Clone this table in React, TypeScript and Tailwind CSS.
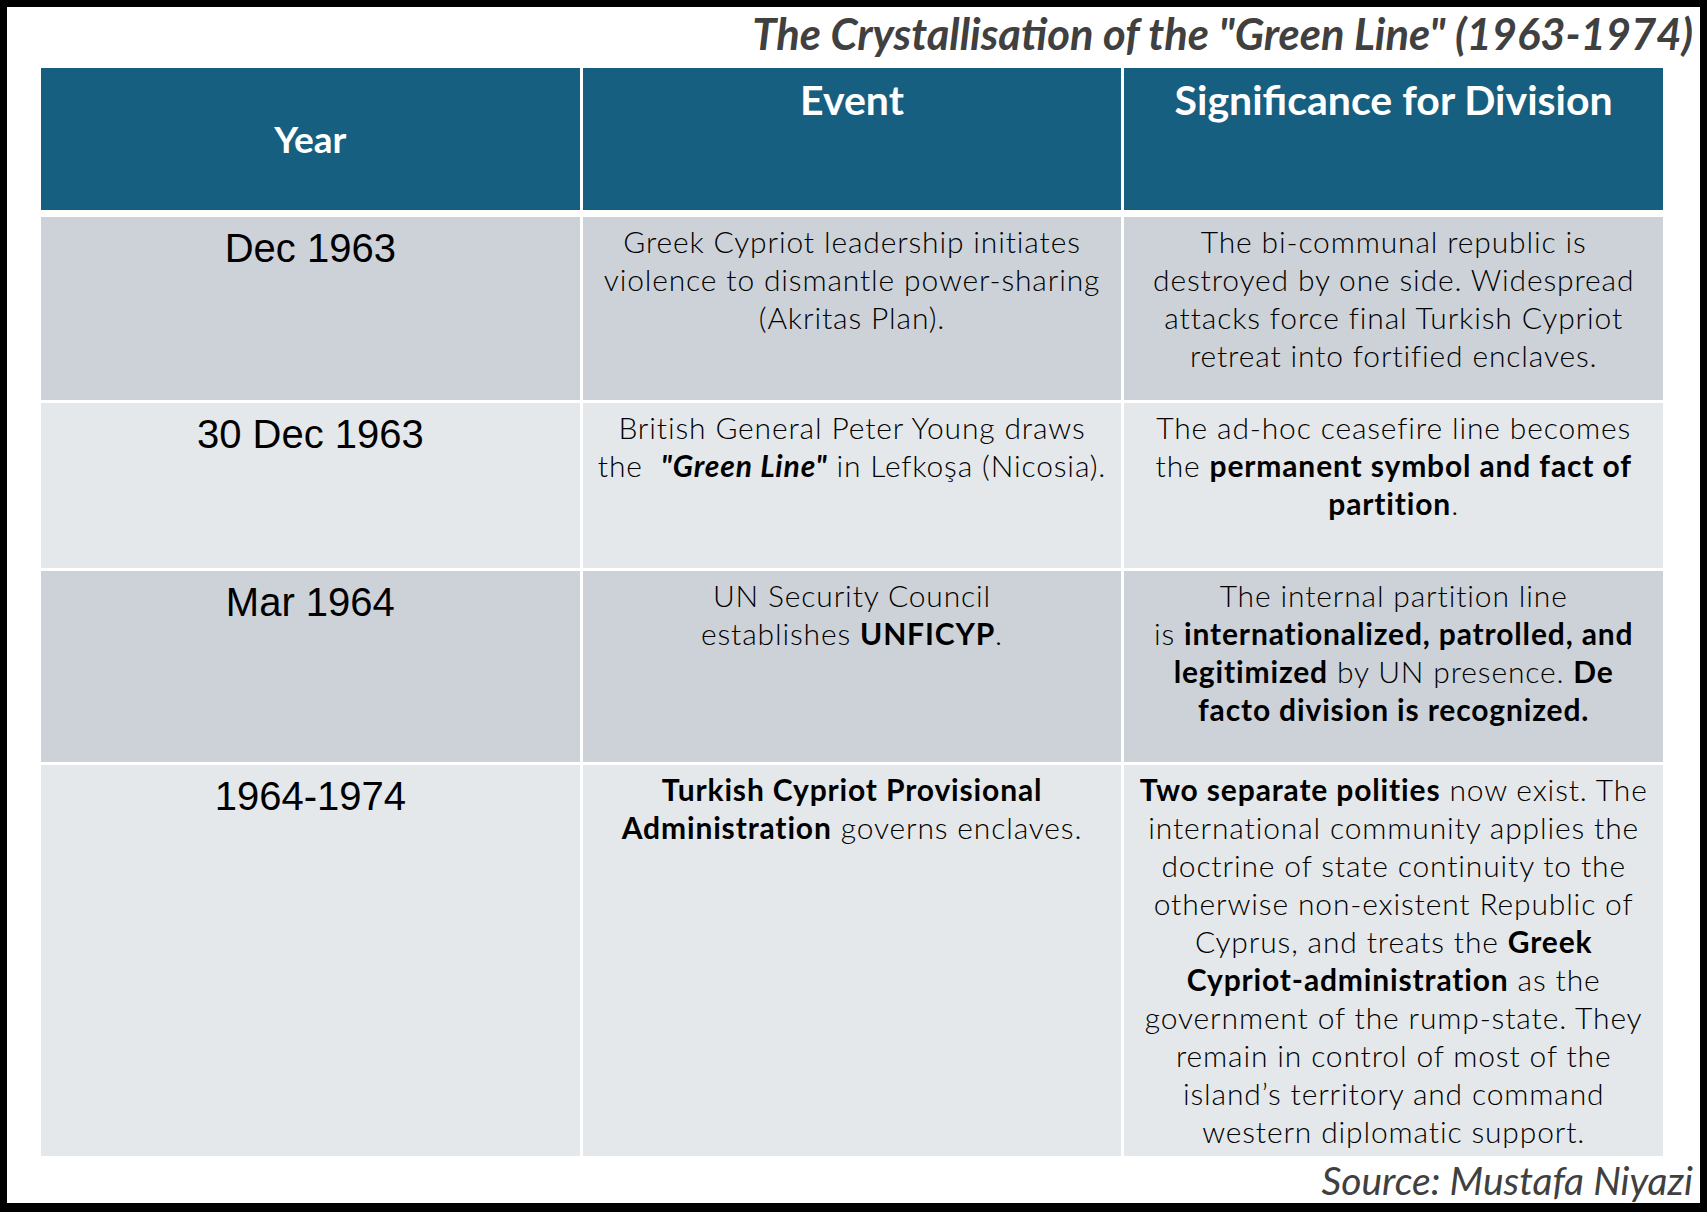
import type { ReactNode } from "react";

const cal = "font-['Lato','Noto_Sans',sans-serif]";
const body = "font-['Lato','Noto_Sans',sans-serif]";
const narrow = "font-['Liberation_Sans_Narrow','Liberation_Sans',sans-serif]";

type Row = {
	year: string;
	event: ReactNode;
	sig: ReactNode;
	h: string;
	bg: string;
};

const B = ({ children }: { children: ReactNode }) => (
	<span className="font-bold">{children}</span>
);

const rows: Row[] = [
	{
		year: "Dec 1963",
		h: "h-[183px]",
		bg: "bg-[#cdd2d9]",
		event: (
			<>
				Greek Cypriot leadership initiates
				<br />
				violence to dismantle power-sharing
				<br />
				(Akritas Plan).
			</>
		),
		sig: (
			<>
				The bi-communal republic is
				<br />
				destroyed by one side. Widespread
				<br />
				attacks force final Turkish Cypriot
				<br />
				retreat into fortified enclaves.
			</>
		),
	},
	{
		year: "30 Dec 1963",
		h: "h-[165px]",
		bg: "bg-[#e5e8eb]",
		event: (
			<>
				British General Peter Young draws
				<br />
				the&nbsp;{" "}
				<span className="font-bold italic">"Green Line"</span> in Lefkoşa
				(Nicosia).
			</>
		),
		sig: (
			<>
				The ad-hoc ceasefire line becomes
				<br />
				the <B>permanent symbol and fact of</B>
				<br />
				<B>partition</B>.
			</>
		),
	},
	{
		year: "Mar 1964",
		h: "h-[191px]",
		bg: "bg-[#cdd2d9]",
		event: (
			<>
				UN Security Council
				<br />
				establishes <B>UNFICYP</B>.
			</>
		),
		sig: (
			<>
				The internal partition line
				<br />
				is <B>internationalized, patrolled, and</B>
				<br />
				<B>legitimized</B> by UN presence. <B>De</B>
				<br />
				<B>facto division is recognized.</B>
			</>
		),
	},
	{
		year: "1964-1974",
		h: "h-[391px]",
		bg: "bg-[#e5e8eb]",
		event: (
			<>
				<B>Turkish Cypriot Provisional</B>
				<br />
				<B>Administration</B> governs enclaves.
			</>
		),
		sig: (
			<>
				<B>Two separate polities</B> now exist. The
				<br />
				international community applies the
				<br />
				doctrine of state continuity to the
				<br />
				otherwise non-existent Republic of
				<br />
				Cyprus, and treats the <B>Greek</B>
				<br />
				<B>Cypriot-administration</B> as the
				<br />
				government of the rump-state. They
				<br />
				remain in control of most of the
				<br />
				island’s territory and command
				<br />
				western diplomatic support.
			</>
		),
	},
];

export default function App() {
	return (
		<div className="w-[1707px] h-[1212px] bg-white border-[7px] border-b-[9px] border-black flex flex-col">
			{/* Title */}
			<h1
				className={`${cal} text-right pr-[7px] pt-[1px] h-[61px] text-[43.5px] leading-[50px] font-bold italic text-[#404040]`}
			>
				The Crystallisation of the "Green Line" (1963-1974)
			</h1>

			<div className="ml-[34px] w-[1622px] flex flex-col">
				{/* Header */}
				<div className="grid grid-cols-3 gap-[3px] h-[142px]">
					<div
						className={`${cal} bg-[#175f80] text-white font-bold text-[37px] flex items-center justify-center`}
					>
						Year
					</div>
					<div
						className={`${cal} bg-[#175f80] text-white font-bold text-[41px] leading-[48px] text-center pt-[8px]`}
					>
						Event
					</div>
					<div
						className={`${cal} bg-[#175f80] text-white font-bold text-[41px] leading-[48px] text-center pt-[8px]`}
					>
						Significance for Division
					</div>
				</div>

				{/* Rows */}
				<div className="mt-[7px] flex flex-col gap-[3px]">
					{rows.map((r) => (
						<div key={r.year} className={`grid grid-cols-3 gap-[3px] ${r.h}`}>
							<div
								className={`${r.bg} ${narrow} text-[40px] leading-[46px] text-black text-center pt-[8px]`}
							>
								{r.year}
							</div>
							<div
								className={`${r.bg} ${body} font-light text-[30px] leading-[38px] tracking-[0.85px] text-black text-center whitespace-nowrap pt-[5px]`}
							>
								{r.event}
							</div>
							<div
								className={`${r.bg} ${body} font-light text-[30px] leading-[38px] tracking-[0.85px] text-black text-center whitespace-nowrap pt-[5px]`}
							>
								{r.sig}
							</div>
						</div>
					))}
				</div>
			</div>

			{/* Source */}
			<p
				className={`${cal} mt-auto text-right pr-[7px] text-[39px] leading-[46px] italic text-[#404040]`}
			>
				Source: Mustafa Niyazi
			</p>
		</div>
	);
}
